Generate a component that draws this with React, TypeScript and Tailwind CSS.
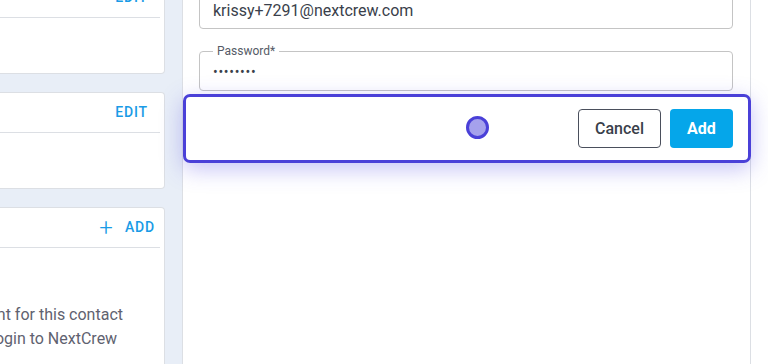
const cards = [
  { action: "EDIT", top: "-mt-[23px]" },
  { action: "EDIT", top: "mt-[18px]" },
];

function CardHeader({ action, plus }: { action: string; plus?: boolean }) {
  return (
    <div
      className={`flex h-[40px] items-center justify-end border-b border-[#dcdfe4] mr-[4px] ${plus ? "pr-[5px]" : "pr-[12px]"}`}
    >
      {plus && <span className="mr-[12px] text-[24px] font-light leading-none text-[#1a9be6]">+</span>}
      <span className="text-[14px] font-medium tracking-[0.06em] text-[#1a9be6]">{action}</span>
    </div>
  );
}

function App() {
  return (
    <div className="flex h-[364px] w-[768px] overflow-hidden bg-white font-['Roboto',sans-serif]">
      {/* Left column with contact cards */}
      <aside className="w-[182px] shrink-0 bg-[#e8eef7] pr-[17px]">
        {cards.map((c, i) => (
          <div
            key={i}
            className={`${c.top} rounded-r-[4px] border border-l-0 border-[#dcdfe4] bg-white`}
          >
            <CardHeader action={c.action} />
            <div className="h-[55px]" />
          </div>
        ))}
        <div className="mt-[18px] h-[200px] rounded-r-[4px] border border-l-0 border-[#dcdfe4] bg-white">
          <CardHeader action="ADD" plus />
          <div className="flex flex-col items-start -ml-[12px] pt-[55px] text-[16px] leading-[24px] text-[#5f6270] whitespace-nowrap">
            <span>unt for this contact</span>
            <span className="ml-[3px]">login to NextCrew</span>
          </div>
        </div>
      </aside>

      {/* Form panel */}
      <section className="relative w-[569px] shrink-0 border-x border-[#dcdfe4] bg-white pl-[16px] pr-[17px]">
        <div className="-mt-[11px] flex h-[40px] items-center rounded-[4px] border border-[#c4c4c4] px-[13px] pt-[4px] text-[16px] text-[#3a3f4b]">
          krissy+7291@nextcrew.com
        </div>
        <div className="relative mt-[22px] flex h-[40px] items-center rounded-[4px] border border-[#c4c4c4] px-[13px]">
          <span className="absolute -top-[8px] left-[13px] bg-white px-[4px] text-[12px] leading-[14px] text-[#555b66]">
            Password*
          </span>
          <span className="pt-[2px] text-[14px] leading-none tracking-[0.05em] text-[#3a3f4b]">••••••••</span>
        </div>
        <div className="mt-[18px] flex justify-end gap-[9px]">
          <button className="h-[39px] w-[83px] rounded-[4px] border border-[#4a4f5c] bg-white text-[16px] font-medium text-[#3a3f4b]">
            Cancel
          </button>
          <button className="h-[39px] w-[63px] rounded-[4px] bg-[#05a6ea] text-[16px] font-bold text-white">
            Add
          </button>
        </div>

        {/* Tour highlight overlay */}
        <div className="pointer-events-none absolute left-0 top-[94px] h-[69px] w-[568px] rounded-[7px] border-[3px] border-[#4a40d8] shadow-[0_6px_22px_rgba(90,80,230,0.35)]" />
        <div className="pointer-events-none absolute left-[283px] top-[116px] h-[23px] w-[23px] rounded-full border-[3px] border-[#4a40d8] bg-[#a5a1ec]" />
      </section>

      <div className="flex-1 bg-white" />
    </div>
  );
}

export default App;
